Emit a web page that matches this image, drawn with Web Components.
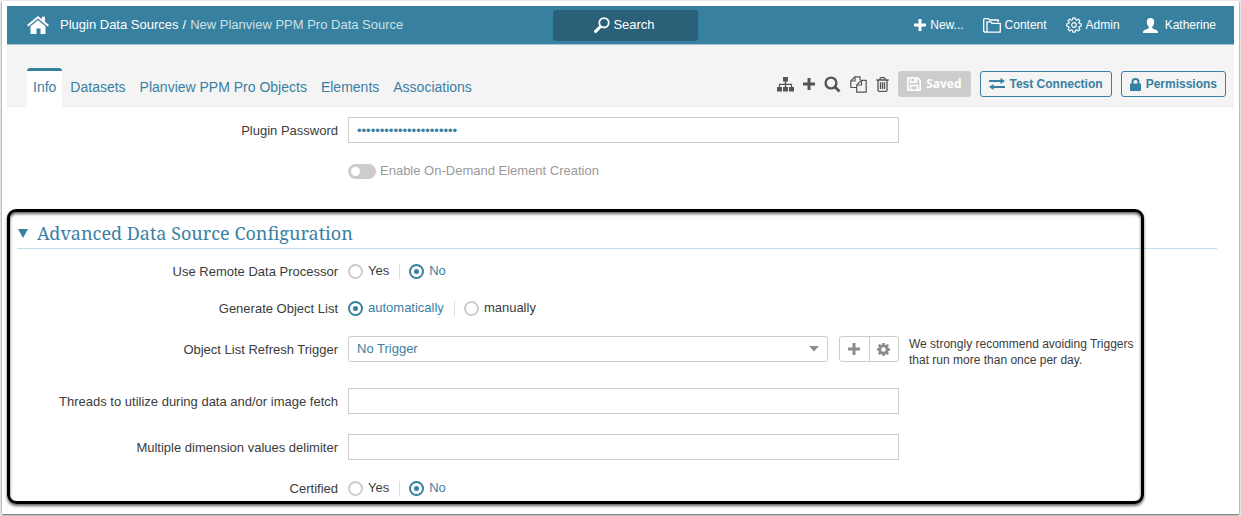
<!DOCTYPE html>
<html lang="en">
<head>
<meta charset="utf-8">
<meta name="viewport" content="width=device-width, initial-scale=1">
<title>New Planview PPM Pro Data Source</title>
<style>
	:root {
		--teal: #37809f;
		--teal-dark: #2a6078;
		--link: #3a7fa3;
		--text: #3c3c3c;
		--line: #ccc;
		--muted: #999;
	}
	body {
		margin: 0;
		background: #f0f0f0;
		color: var(--text);
		font: 13px/16px "Liberation Sans", Arial, sans-serif;
	}
</style>
</head>
<body>
<app-window>
	<app-header></app-header>
	<tab-bar></tab-bar>
	<main>
		<text-row label="Plugin Password" type="password" value="correcthorsebatteryabc"></text-row>
		<toggle-row label="Enable On-Demand Element Creation"></toggle-row>
		<config-section heading="Advanced Data Source Configuration">
			<radio-row label="Use Remote Data Processor" options="Yes,No" value="No" compact></radio-row>
			<radio-row label="Generate Object List" options="automatically,manually" value="automatically"></radio-row>
			<select-row label="Object List Refresh Trigger" value="No Trigger">We strongly recommend avoiding Triggers that run more than once per day.</select-row>
			<text-row label="Threads to utilize during data and/or image fetch"></text-row>
			<text-row label="Multiple dimension values delimiter" compact></text-row>
			<radio-row label="Certified" options="Yes,No" value="No" last></radio-row>
		</config-section>
	</main>
</app-window>

<script>
const ICONS = {
	home: `<svg width="22" height="18" viewBox="0 0 22 18" fill="#fff"><path d="M11 0 0 9l1.300 1.500L11 2.600l9.700 7.900L22 9l-4-3.300V.8h-3v2.500z"/><path d="M3.500 10.200 11 4.200l7.500 6V18h-5v-5.500h-4V18h-6z"/></svg>`,
	lens: `<svg width="16" height="16" viewBox="0 0 16 16" fill="none" stroke="#fff"><circle cx="10" cy="5.800" r="4.700" stroke-width="1.800"/><path d="M6.300 9.700 1.600 14.400" stroke-width="3" stroke-linecap="round"/></svg>`,
	plus: `<svg width="12" height="12" viewBox="0 0 12 12" fill="currentColor"><path d="M4.500 0h3v4.500H12v3H7.500V12h-3V7.500H0v-3h4.500z"/></svg>`,
	folder: `<svg width="18" height="15" viewBox="0 0 18 15" fill="none" stroke="#fff" stroke-width="1.300" stroke-linejoin="round"><path d="M4 14H1.800Q.7 14 .7 13V1.700Q.7.7 1.700.7h3.600l1.500 1.300h8.500v2"/><path d="M4 14.200V3.800h4l1 1.500h8.300v8.900z"/></svg>`,
	cog: `<svg width="16" height="16" viewBox="0 0 16 16" fill="none" stroke="#fff" stroke-width="1.200" stroke-linejoin="round"><path d="M6.900.8h2.200l.4 1.900 1.200.5 1.700-1.100 1.500 1.500-1.100 1.700.5 1.200 1.900.4v2.200l-1.900.4-.5 1.200 1.100 1.700-1.500 1.500-1.700-1.100-1.200.5-.4 1.900H6.900l-.4-1.900-1.200-.5-1.700 1.100-1.500-1.500 1.100-1.700-.5-1.200-1.900-.4V6.900l1.900-.4.5-1.200-1.100-1.700 1.500-1.500 1.700 1.100 1.200-.5z"/><circle cx="8" cy="8" r="2.300"/></svg>`,
	user: `<svg width="15" height="15" viewBox="0 0 15 15" fill="#fff"><path d="M7.500 0c2.300 0 3.700 1.500 3.700 4 0 1.900-.8 3.700-1.900 4.500v1.700c.3.800 4.900 1.200 5.500 3.300L15 15H0l.2-1.500c.6-2.100 5.200-2.500 5.500-3.300V8.500C4.600 7.700 3.800 5.900 3.800 4c0-2.500 1.400-4 3.700-4z"/></svg>`,
	sitemap: `<svg width="17" height="15" viewBox="0 0 17 15" fill="currentColor"><path d="M6 0h5v4.600H9.200v2.200h5.900v3.300H17V14.500h-5v-4.400h1.900V8H9.200v2.100H11v4.400H6v-4.400h1.800V8H3.100v2.100H5v4.400H0v-4.400h1.900V6.800h5.900V4.600H6z"/></svg>`,
	search: `<svg width="17" height="17" viewBox="0 0 17 17" fill="none" stroke="currentColor"><circle cx="7" cy="7" r="5.400" stroke-width="2.400"/><path d="m11 11 4.500 4.500" stroke-width="2.800"/></svg>`,
	copy: `<svg width="17" height="17" viewBox="0 0 17 17" fill="none" stroke="currentColor" stroke-width="1.200"><path d="M6.500 11.500H.8V5L5 .8h5v3.500"/><path d="M.8 5H5V.8M11.500 4.300h4.700v11.900H6.700V9z"/><path d="M6.700 9h4.800V4.300"/></svg>`,
	trash: `<svg width="13" height="15" viewBox="0 0 13 15" fill="none" stroke="currentColor" stroke-width="1.300"><path d="M.3 3h12.400M4 3V1.700q0-1 1-1h3q1 0 1 1V3M2 3v10q0 1.300 1.200 1.300h6.600Q11 14.300 11 13V3M4.500 5.300v6.700M6.500 5.300v6.700M8.500 5.300v6.700"/></svg>`,
	save: `<svg width="14" height="14" viewBox="0 0 14 14" fill="none" stroke="#fff" stroke-width="1.600"><path d="M.8.8h9.700l2.700 2.700v9.700H.8zM3.500 13V8.500h7V13"/><path d="M3.500.8v4.500h6V.8"/><path d="M7.800 1.500v3"/></svg>`,
	swap: `<svg width="16" height="12" viewBox="0 0 16 12" fill="currentColor"><path d="M0 2h11.500V0L16 3l-4.500 3V4H0zM16 8H4.500V6L0 9l4.500 3v-2H16z"/></svg>`,
	lock: `<svg width="11" height="13" viewBox="0 0 11 13" fill="currentColor"><path d="M1.500 5.500V4a4 4 0 0 1 8 0v1.500h.7q.8 0 .8.800v5.900q0 .8-.8.8H.8Q0 13 0 12.200V6.300q0-.8.8-.8zm2 0h4V4a2 2 0 0 0-4 0z"/></svg>`,
	gear: `<svg width="13" height="13" viewBox="0 0 13 13" fill="currentColor" fill-rule="evenodd"><path d="M5.400 0h2.200l.4 1.700 1 .4L10.500 1.100 12 2.600 11 4.100l.4 1 1.600.4v2.200l-1.600.3-.5 1 1.100 1.500-1.500 1.500L9 11l-1 .4L7.600 13H5.400L5 11.400 4 11l-1.500 1L1 10.500 2 9l-.4-1L0 7.600V5.400l1.600-.4L2 4 1 2.500 2.500 1 4 2l1-.4zM6.500 4.200a2.300 2.300 0 1 0 0 4.600 2.300 2.300 0 0 0 0-4.600z"/></svg>`,
};

class AppWindow extends HTMLElement {
	constructor() {
		super();
		this.attachShadow({ mode: "open" });
		this.shadowRoot.innerHTML = `
			<style>
				:host {
					display: block;
					box-sizing: border-box;
					min-height: calc(100vh - 3px);
					margin: 1px 2px 2px;
					padding: 5px;
					background: #fff;
					box-shadow: 0 1px 2px rgba(0, 0, 0, 0.65);
				}
				::slotted(main) {
					display: block;
					padding-top: 10px;
				}
			</style>
			<slot></slot>
		`;
	}
}

class AppHeader extends HTMLElement {
	constructor() {
		super();
		this.attachShadow({ mode: "open" });
		this.shadowRoot.innerHTML = `
			<style>
				:host { display: block; }
				header {
					display: grid;
					grid-template-columns: 1fr 145px 1fr;
					align-items: center;
					height: 38px;
					padding: 0 10px 0 20px;
					background: var(--teal);
					border-bottom: 1px solid #a3c4d2;
					color: #fff;
				}
				nav, a, button {
					display: flex;
					align-items: center;
				}
				a {
					color: inherit;
					text-decoration: none;
				}
				.crumbs {
					gap: 4px;
					white-space: nowrap;
				}
				.home { margin-right: 7px; }
				.current { color: #cde0e8; }
				button {
					justify-content: center;
					gap: 3px;
					height: 31px;
					padding: 0 2px 0 0;
					border: 0;
					border-radius: 3px;
					background: var(--teal-dark);
					color: #fff;
					font: inherit;
				}
				.menu {
					justify-content: flex-end;
					gap: 19px;
					padding-right: 8px;
					font-size: 12px;
				}
				.menu a { gap: 4px; }
				.menu .account {
					gap: 7px;
					margin-left: 4px;
				}
			</style>
			<header>
				<nav class="crumbs" aria-label="Breadcrumb">
					<a class="home" href="#" aria-label="Home">${ICONS.home}</a>
					<a href="#">Plugin Data Sources</a>
					<span>/</span>
					<span class="current">New Planview PPM Pro Data Source</span>
				</nav>
				<button type="button">${ICONS.lens}Search</button>
				<nav class="menu" aria-label="Main">
					<a href="#">${ICONS.plus}New...</a>
					<a href="#">${ICONS.folder}Content</a>
					<a href="#">${ICONS.cog}Admin</a>
					<a href="#" class="account">${ICONS.user}Katherine</a>
				</nav>
			</header>
		`;
	}
}

class TabBar extends HTMLElement {
	constructor() {
		super();
		this.attachShadow({ mode: "open" });
		this.shadowRoot.innerHTML = `
			<style>
				:host {
					display: flex;
					justify-content: space-between;
					align-items: flex-end;
					height: 61px;
					padding: 0 8px 0 20px;
					background: #f4f4f4;
					border-bottom: 1px solid #ebebeb;
				}
				nav, .actions, button {
					display: flex;
					align-items: center;
				}
				nav {
					gap: 2px;
					margin-bottom: -1px;
				}
				nav a {
					padding: 8px 6px 12px;
					border-top: 3px solid transparent;
					color: var(--link);
					font-size: 14px;
					text-decoration: none;
					white-space: nowrap;
				}
				nav a[aria-current] {
					background: #fff;
					border-color: var(--teal);
					border-radius: 3px 3px 0 0;
				}
				.actions {
					gap: 9px;
					padding-bottom: 9px;
				}
				button {
					justify-content: center;
					gap: 5px;
					box-sizing: border-box;
					height: 26px;
					padding: 0 8px;
					border: 1px solid var(--teal);
					border-radius: 3px;
					background: transparent;
					color: var(--teal);
					font: bold 12px/16px "Liberation Sans", Arial, sans-serif;
					white-space: nowrap;
				}
				.icon {
					padding: 0;
					border: 0;
					color: #555;
				}
				.saved {
					border-color: #ccc;
					background: #ccc;
					color: #fff;
					font-family: "Open Sans", sans-serif;
				}
			</style>
			<nav aria-label="Tabs">
				<a href="#" aria-current="page">Info</a>
				<a href="#">Datasets</a>
				<a href="#">Planview PPM Pro Objects</a>
				<a href="#">Elements</a>
				<a href="#">Associations</a>
			</nav>
			<div class="actions">
				<button type="button" class="icon" aria-label="Hierarchy">${ICONS.sitemap}</button>
				<button type="button" class="icon" aria-label="Add">${ICONS.plus}</button>
				<button type="button" class="icon" aria-label="Find">${ICONS.search}</button>
				<button type="button" class="icon" aria-label="Copy">${ICONS.copy}</button>
				<button type="button" class="icon" aria-label="Delete">${ICONS.trash}</button>
				<button type="button" class="saved" disabled>${ICONS.save}Saved</button>
				<button type="button">${ICONS.swap}Test Connection</button>
				<button type="button">${ICONS.lock}Permissions</button>
			</div>
		`;
	}
}

class ConfigSection extends HTMLElement {
	constructor() {
		super();
		this.attachShadow({ mode: "open" });
		this.shadowRoot.innerHTML = `
			<style>
				:host {
					display: block;
					position: relative;
					padding-bottom: 3px;
				}
				/* callout frame drawn over the section */
				:host::after {
					content: "";
					position: absolute;
					inset: 0 90px 0 0;
					border: 3px solid #000;
					border-radius: 9px;
					box-shadow: 0 2px 3px rgba(0, 0, 0, 0.6), inset 0 2px 3px rgba(0, 0, 0, 0.6);
					pointer-events: none;
				}
				h2 {
					margin: 0 17px 9px 10px;
					border-bottom: 1px solid #c5dce8;
					font: inherit;
				}
				button {
					display: flex;
					align-items: center;
					gap: 9px;
					height: 39px;
					padding: 8px 0 0 1px;
					box-sizing: border-box;
					border: 0;
					background: none;
					color: var(--link);
					font: 18px/24px "Noto Serif", "Droid Serif", "DejaVu Serif", serif;
					white-space: nowrap;
				}
				[aria-expanded="false"] svg { transform: rotate(-90deg); }
			</style>
			<h2>
				<button type="button" aria-expanded="true">
					<svg width="10" height="10" viewBox="0 0 10 10" fill="#37809f"><path d="M0 1h10L5 10z"/></svg>
					<span></span>
				</button>
			</h2>
			<div><slot></slot></div>
		`;
		this.shadowRoot.querySelector("button").addEventListener("click", e => {
			const button = e.currentTarget;
			const open = button.getAttribute("aria-expanded") === "true";
			button.setAttribute("aria-expanded", String(!open));
			this.shadowRoot.querySelector("div").hidden = open;
		});
	}

	connectedCallback() {
		this.shadowRoot.querySelector("span").textContent = this.getAttribute("heading");
	}
}

// Shared layout of the form rows: caption, control, note.
const ROW_STYLE = `
	:host {
		display: grid;
		grid-template-columns: 331px minmax(0, 551px) minmax(0, 1fr);
		column-gap: 10px;
		margin-bottom: 15px;
	}
	:host([compact]) { margin-bottom: 11px; }
	:host([last]) { margin-bottom: 0; }
	.caption {
		padding: 6px 0 4px;
		text-align: right;
	}
	input[type="text"], input[type="password"], select {
		box-sizing: border-box;
		width: 100%;
		height: 26px;
		margin: 0;
		padding: 0 8px;
		border: 1px solid var(--line);
		border-radius: 0;
		background: #fff;
		color: var(--link);
		font: inherit;
	}
`;

class TextRow extends HTMLElement {
	constructor() {
		super();
		this.attachShadow({ mode: "open" });
		this.shadowRoot.innerHTML = `
			<style>
				${ROW_STYLE}
				:host { margin-bottom: 20px; }
				:host([type="password"]), :host([compact]) { margin-bottom: 15px; }
			</style>
			<label class="caption" for="field"></label>
			<input id="field">
		`;
	}

	connectedCallback() {
		const input = this.shadowRoot.querySelector("input");
		this.shadowRoot.querySelector("label").textContent = this.getAttribute("label");
		input.type = this.getAttribute("type") ?? "text";
		input.value = this.getAttribute("value") ?? "";
	}
}

class ToggleRow extends HTMLElement {
	constructor() {
		super();
		this.attachShadow({ mode: "open" });
		this.shadowRoot.innerHTML = `
			<style>
				${ROW_STYLE}
				:host { margin-bottom: 25px; }
				label {
					grid-column: 2;
					display: flex;
					align-items: center;
					gap: 4px;
					height: 26px;
					color: var(--muted);
				}
				input {
					appearance: none;
					display: flex;
					align-items: center;
					width: 28px;
					height: 15px;
					box-sizing: border-box;
					margin: 0;
					padding: 0 3px;
					border-radius: 8px;
					background: var(--line);
				}
				input::before {
					content: "";
					width: 9px;
					height: 9px;
					border-radius: 50%;
					background: #fff;
				}
			</style>
			<label><input type="checkbox" role="switch" disabled><span></span></label>
		`;
	}

	connectedCallback() {
		this.shadowRoot.querySelector("span").textContent = this.getAttribute("label");
	}
}

class RadioRow extends HTMLElement {
	constructor() {
		super();
		this.attachShadow({ mode: "open" });
		this.shadowRoot.innerHTML = `
			<style>
				${ROW_STYLE}
				.group {
					display: flex;
					align-items: center;
					height: 26px;
				}
				label {
					display: flex;
					align-items: center;
					gap: 5px;
				}
				label + label::before {
					content: "";
					width: 1px;
					height: 15px;
					margin: 0 4px 0 10px;
					background: #ddd;
				}
				label:has(:checked) { color: var(--link); }
				input {
					appearance: none;
					display: grid;
					place-content: center;
					box-sizing: border-box;
					width: 15px;
					height: 15px;
					margin: 0;
					border: 2px solid var(--line);
					border-radius: 50%;
					background: #fff;
				}
				input:checked { border-color: var(--teal); }
				input:checked::before {
					content: "";
					width: 5px;
					height: 5px;
					border-radius: 50%;
					background: var(--teal);
				}
			</style>
			<span class="caption" id="caption"></span>
			<div class="group" role="radiogroup" aria-labelledby="caption"></div>
		`;
	}

	connectedCallback() {
		this.shadowRoot.querySelector("#caption").textContent = this.getAttribute("label");
		this.shadowRoot.querySelector(".group").innerHTML = this.getAttribute("options").split(",").map(option => `
			<label><input type="radio" name="choice" value="${option}" ${option === this.getAttribute("value") ? "checked" : ""}>${option}</label>
		`).join("");
	}
}

class SelectRow extends HTMLElement {
	constructor() {
		super();
		this.attachShadow({ mode: "open" });
		this.shadowRoot.innerHTML = `
			<style>
				${ROW_STYLE}
				:host { margin-bottom: 20px; }
				.control {
					display: flex;
					align-items: flex-start;
					gap: 11px;
				}
				.drop {
					display: grid;
					flex: 1;
					align-items: center;
				}
				.drop > * { grid-area: 1 / 1; }
				.drop svg {
					justify-self: end;
					margin-right: 9px;
					pointer-events: none;
				}
				select {
					appearance: none;
					border-radius: 3px;
				}
				.buttons {
					display: flex;
					box-sizing: border-box;
					width: 60px;
					height: 26px;
					border: 1px solid var(--line);
					border-radius: 3px;
				}
				button {
					display: flex;
					flex: 1;
					align-items: center;
					justify-content: center;
					padding: 0;
					border: 0;
					background: none;
					color: #8c8c8c;
				}
				button + button { border-left: 1px solid var(--line); }
				.note {
					max-width: 240px;
					font-size: 12px;
				}
			</style>
			<label class="caption" for="field"></label>
			<div class="control">
				<div class="drop">
					<select id="field"><option></option></select>
					<svg width="10" height="6" viewBox="0 0 10 6" fill="#8c8c8c"><path d="M0 0h10L5 5.500z"/></svg>
				</div>
				<div class="buttons">
					<button type="button" aria-label="Add trigger">${ICONS.plus}</button>
					<button type="button" aria-label="Edit trigger">${ICONS.gear}</button>
				</div>
			</div>
			<div class="note"><slot></slot></div>
		`;
	}

	connectedCallback() {
		this.shadowRoot.querySelector("label").textContent = this.getAttribute("label");
		this.shadowRoot.querySelector("option").textContent = this.getAttribute("value");
	}
}

customElements.define("app-window", AppWindow);
customElements.define("app-header", AppHeader);
customElements.define("tab-bar", TabBar);
customElements.define("config-section", ConfigSection);
customElements.define("text-row", TextRow);
customElements.define("toggle-row", ToggleRow);
customElements.define("radio-row", RadioRow);
customElements.define("select-row", SelectRow);
</script>
</body>
</html>
